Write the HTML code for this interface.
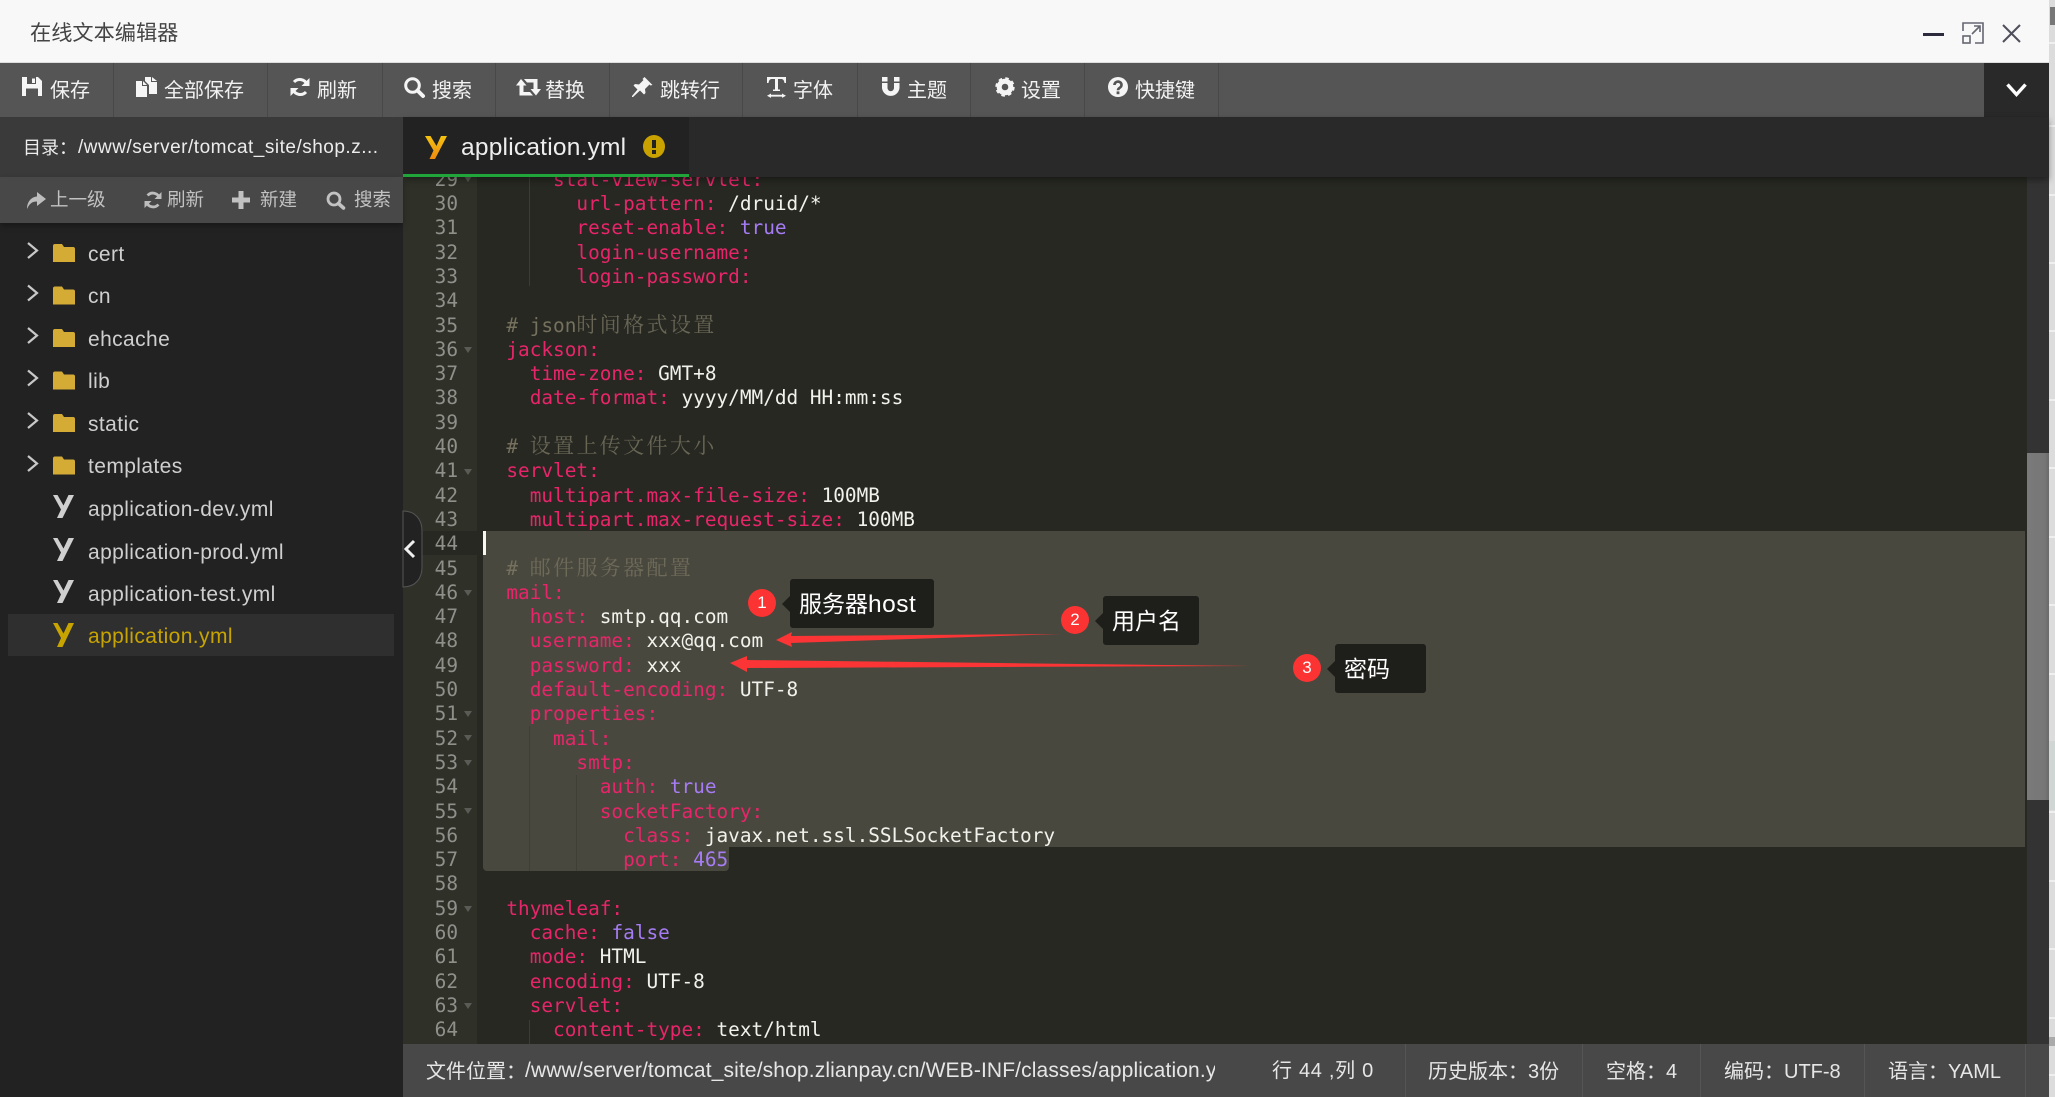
<!DOCTYPE html>
<html lang="zh"><head><meta charset="utf-8"><title>在线文本编辑器</title>
<style>
html,body{margin:0;padding:0;width:2055px;height:1097px;overflow:hidden;background:#dcdcdc}
body{position:relative;font-family:"Liberation Sans","Noto Sans CJK SC",sans-serif;filter:blur(.35px)}
.a{position:absolute}
.t{position:absolute;white-space:nowrap}
svg{position:absolute;overflow:visible}
.sep{position:absolute;top:63px;height:54px;width:1px;background:#484848}
.tb{color:#f2f2f2;font-size:20px;line-height:54px;top:63.5px}
.ab{color:#c2c2c2;font-size:18.5px;line-height:46px;top:177px}
.f{color:#cfcfcf;font-size:21px;line-height:42px;left:88px;letter-spacing:.4px}
.st{color:#e6e6e6;font-size:20px;line-height:53px;top:1045px}
.st.up{top:1043px}
.fw{font-family:"Noto Sans CJK SC",sans-serif}
.code{font-family:"DejaVu Sans Mono","Liberation Mono","Noto Sans CJK SC",monospace;font-size:19.4px;line-height:24.3px;white-space:pre}
.code div{height:24.3px}
.k{color:#e8256a}.v{color:#f2f2ec}.n{color:#a67cf5}.c{color:#75715e}
.cj{letter-spacing:2.36px;font-size:21px;font-family:"Liberation Mono","Noto Serif CJK SC",serif;opacity:.85}
.fold{position:absolute;left:464px;width:0;height:0;border-left:4.5px solid transparent;border-right:4.5px solid transparent;border-top:6px solid #5a5b54}
.sl{position:absolute;left:2049px;width:6px;height:2px;background:#efefef}
.box{position:absolute;background:#1e1e1a;border-radius:3px;color:#fff;font-size:23px}
.box:before{content:"";position:absolute;left:-8px;top:50%;margin-top:-8px;border-top:8px solid transparent;border-bottom:8px solid transparent;border-right:8px solid #1e1e1a}
.dot{position:absolute;width:28px;height:28px;border-radius:50%;background:#fb3333;color:#fff;font-size:17px;line-height:28px;text-align:center}
</style></head><body>

<!-- right strip -->
<div class="sl" style="top:42px"></div><div class="sl" style="top:125px"></div><div class="sl" style="top:194px"></div><div class="sl" style="top:262px"></div><div class="sl" style="top:330px"></div><div class="sl" style="top:399px"></div><div class="sl" style="top:467px"></div><div class="sl" style="top:536px"></div><div class="sl" style="top:604px"></div><div class="sl" style="top:673px"></div>
<div class="a" style="left:2049px;top:741px;width:6px;height:69px;background:#cfd6d3"></div>
<div class="sl" style="top:811px"></div><div class="sl" style="top:880px"></div><div class="sl" style="top:948px"></div><div class="sl" style="top:1017px"></div>
<div class="a" style="left:2049px;top:1037px;width:6px;height:9px;background:#aaa"></div>
<div class="sl" style="top:1074px"></div>
<div class="a" style="left:2050px;top:7px;width:5px;height:18px;background:#777"></div>

<!-- editor -->
<div class="a" style="left:403px;top:117px;width:1646px;height:980px;background:#272822"></div>
<div class="a" style="left:403px;top:177px;width:74px;height:867px;background:#2f3129"></div>
<div class="a" style="left:2027px;top:177px;width:22px;height:867px;background:#333"></div>
<div class="a" style="left:2027px;top:453px;width:22px;height:347px;background:linear-gradient(90deg,#7a7a7a,#777 80%,#6a6a6a)"></div>

<!-- selection -->
<div class="a" style="left:483px;top:531px;width:1542px;height:316px;background:#49483e;border-radius:3px 0 0 0"></div>
<div class="a" style="left:483px;top:846px;width:246px;height:25px;background:#49483e;border-radius:0 0 4px 4px"></div>
<div class="a" style="left:422px;top:531px;width:61px;height:24px;background:#272822"></div>
<div class="a" style="left:483px;top:531px;width:3px;height:24px;background:#f8f8f0"></div>

<!-- indent guides -->
<div class="a" style="left:529px;top:177px;width:1px;height:109px;background:#3b3c35"></div>
<div class="a" style="left:529px;top:726px;width:1px;height:145px;background:#403f36"></div>
<div class="a" style="left:576px;top:775px;width:1px;height:96px;background:#403f36"></div>
<div class="a" style="left:529px;top:1020px;width:1px;height:24px;background:#3b3c35"></div>

<!-- gutter numbers -->
<div class="a code" style="left:410px;top:167.8px;width:48px;text-align:right;color:#8f908a">29
30
31
32
33
34
35
36
37
38
39
40
41
42
43
44
45
46
47
48
49
50
51
52
53
54
55
56
57
58
59
60
61
62
63
64</div>
<div class="fold" style="top:176px"></div>
<div class="fold" style="top:347px"></div>
<div class="fold" style="top:469px"></div>
<div class="fold" style="top:590px"></div>
<div class="fold" style="top:711px"></div>
<div class="fold" style="top:735px"></div>
<div class="fold" style="top:760px"></div>
<div class="fold" style="top:808px"></div>
<div class="fold" style="top:906px"></div>
<div class="fold" style="top:1003px"></div>

<!-- code -->
<div class="a code" style="left:483px;top:167.8px;width:1540px;height:876px;overflow:hidden"><div>      <span class="k">stat-view-servlet:</span></div><div>        <span class="k">url-pattern:</span><span class="v"> /druid/*</span></div><div>        <span class="k">reset-enable:</span> <span class="n">true</span></div><div>        <span class="k">login-username:</span></div><div>        <span class="k">login-password:</span></div><div> </div><div>  <span class="c"># json<span class="cj">时间格式设置</span></span></div><div>  <span class="k">jackson:</span></div><div>    <span class="k">time-zone:</span><span class="v"> GMT+8</span></div><div>    <span class="k">date-format:</span><span class="v"> yyyy/MM/dd HH:mm:ss</span></div><div> </div><div>  <span class="c"># <span class="cj">设置上传文件大小</span></span></div><div>  <span class="k">servlet:</span></div><div>    <span class="k">multipart.max-file-size:</span><span class="v"> 100MB</span></div><div>    <span class="k">multipart.max-request-size:</span><span class="v"> 100MB</span></div><div> </div><div>  <span class="c"># <span class="cj">邮件服务器配置</span></span></div><div>  <span class="k">mail:</span></div><div>    <span class="k">host:</span><span class="v"> smtp.qq.com</span></div><div>    <span class="k">username:</span><span class="v"> xxx@qq.com</span></div><div>    <span class="k">password:</span><span class="v"> xxx</span></div><div>    <span class="k">default-encoding:</span><span class="v"> UTF-8</span></div><div>    <span class="k">properties:</span></div><div>      <span class="k">mail:</span></div><div>        <span class="k">smtp:</span></div><div>          <span class="k">auth:</span> <span class="n">true</span></div><div>          <span class="k">socketFactory:</span></div><div>            <span class="k">class:</span><span class="v"> javax.net.ssl.SSLSocketFactory</span></div><div>            <span class="k">port:</span> <span class="n">465</span></div><div> </div><div>  <span class="k">thymeleaf:</span></div><div>    <span class="k">cache:</span> <span class="n">false</span></div><div>    <span class="k">mode:</span><span class="v"> HTML</span></div><div>    <span class="k">encoding:</span><span class="v"> UTF-8</span></div><div>    <span class="k">servlet:</span></div><div>      <span class="k">content-type:</span><span class="v"> text/html</span></div></div>

<!-- annotations -->
<svg style="left:0;top:0" width="2055" height="1097">
<polygon fill="#fb3535" points="776,640 792,632 791,636 1060,634 791,643 792,647"/>
<polygon fill="#fb3535" points="730,663 747,656 747,660 1250,666 747,668 747,672"/>
</svg>
<div class="dot" style="left:748px;top:589px">1</div>
<div class="box" style="left:790px;top:579px;width:144px;height:49px"><span class="t" style="left:9px;top:1px;line-height:49px">服务器<span style="font-size:24.5px;letter-spacing:.5px">host</span></span></div>
<div class="dot" style="left:1061px;top:606px">2</div>
<div class="box" style="left:1103px;top:596px;width:96px;height:49px"><span class="t" style="left:9px;top:1px;line-height:49px">用户名</span></div>
<div class="dot" style="left:1293px;top:654px">3</div>
<div class="box" style="left:1335px;top:644px;width:91px;height:49px"><span class="t" style="left:9px;top:1px;line-height:49px">密码</span></div>

<!-- title bar -->
<div class="a" style="left:0;top:0;width:2049px;height:63px;background:#f8f8f8;border-bottom:0"></div>
<div class="a" style="left:0;top:62px;width:2049px;height:1px;background:#ddd"></div>
<div class="t" style="left:30px;top:2px;line-height:64px;font-size:21.2px;color:#444">在线文本编辑器</div>
<div class="a" style="left:1923px;top:33px;width:21px;height:3px;background:#2c2b3d"></div>
<svg style="left:1962px;top:22px" width="22" height="22" fill="none" stroke="#666672" stroke-width="1.6"><path d="M1 9V1H21V21H13"/><path d="M10 12L18 4M12 4h6v6" /><rect x="1" y="14" width="7" height="7"/></svg>
<svg style="left:2002px;top:24px" width="19" height="19" fill="none" stroke="#4f4f5c" stroke-width="2"><path d="M1 1L18 18M18 1L1 18"/></svg>

<!-- toolbar -->
<div class="a" style="left:0;top:63px;width:1984px;height:54px;background:#555"></div>
<div class="a" style="left:1984px;top:63px;width:65px;height:54px;background:#292929"></div>
<svg style="left:2006px;top:83px" width="21" height="14" fill="none" stroke="#fff" stroke-width="3.4"><path d="M1.5 1.5L10.5 11.5L19.5 1.5"/></svg>
<div class="sep" style="left:113px"></div><div class="sep" style="left:267px"></div><div class="sep" style="left:382px"></div><div class="sep" style="left:495px"></div><div class="sep" style="left:609px"></div><div class="sep" style="left:742px"></div><div class="sep" style="left:857px"></div><div class="sep" style="left:970px"></div><div class="sep" style="left:1084px"></div><div class="sep" style="left:1218px"></div>

<svg style="left:22px;top:77px" width="20" height="19" fill="#f5f5f5"><path fill-rule="evenodd" d="M0 0H16L20 4V19H0ZM5 0V7H14V0ZM4 11.5V19H16V11.5ZM10 1.500H13V6H10Z"/></svg>
<div class="t tb" style="left:50px">保存</div>
<svg style="left:136px;top:77px" width="21" height="20" fill="#f5f5f5"><path d="M0 4h6v5h5v11H0zM7 4l4 4H7zM9 0h6v5h6v12h-8V8L9 4zM16 0l5 4h-5z"/></svg>
<div class="t tb" style="left:164px">全部保存</div>
<svg style="left:290px;top:77px" width="20" height="20"><g fill="none" stroke="#f5f5f5" stroke-width="3"><path d="M17 7.500A7.800 7.800 0 0 0 4 5"/><path d="M3 12.500A7.800 7.800 0 0 0 16 15"/></g><path fill="#f5f5f5" d="M19.500 1v8h-8zM.5 19v-8h8z"/></svg>
<div class="t tb" style="left:317px">刷新</div>
<svg style="left:404px;top:77px" width="21" height="20" fill="none" stroke="#f5f5f5"><circle cx="8.500" cy="8.500" r="6.800" stroke-width="3"/><path d="M13.500 13.500L19 19" stroke-width="4" stroke-linecap="round"/></svg>
<div class="t tb" style="left:432px">搜索</div>
<svg style="left:516px;top:79px" width="25" height="17" fill="#f5f5f5"><path d="M5 0L10.500 6.500H7.500V13H14L17 16.500H3.500V6.500H0ZM20 16.500L14.500 10H17.500V3.500H11L8 0H21.500V10H25Z"/></svg>
<div class="t tb" style="left:545px">替换</div>
<svg style="left:632px;top:77px" width="21" height="21" fill="#f5f5f5"><path d="M12.500 0l8 8-2 .5-1-1-4.500 4.500.5 4-1.500 1.500-4-4L1 20H0v-1l5.500-6.500-4-4L3 7l4 .5L11.500 3l-1-1z"/></svg>
<div class="t tb" style="left:660px">跳转行</div>
<svg style="left:767px;top:77px" width="19" height="21" fill="#f5f5f5"><path d="M0 0H19V6H17.500C17 3 16 2 14 2H11V12.500H13V14H6V12.500H8V2H5C3 2 2 3 1.500 6H0Z"/><path d="M4 16.500v1.200h11v-1.200l4 2.200-4 2.200v-1.300H4v1.300L0 18.700z"/></svg>
<div class="t tb" style="left:793px">字体</div>
<svg style="left:882px;top:77px" width="18" height="20" fill="#f5f5f5"><path d="M0 0H5.500V4.500H0ZM12 0H17.500V4.500H12ZM0 6H5.500V11a3.200 3.200 0 0 0 6.500 0V6H17.500V11A8.800 8.800 0 0 1 0 11Z"/></svg>
<div class="t tb" style="left:907px">主题</div>
<svg style="left:995px;top:77px" width="20" height="20" fill="none" stroke="#f5f5f5"><circle cx="10" cy="10" r="5.800" stroke-width="5"/><circle cx="10" cy="10" r="8.300" stroke-width="2.800" stroke-dasharray="3.400 3.120"/></svg>
<div class="t tb" style="left:1021px">设置</div>
<svg style="left:1108px;top:77px" width="20" height="20"><circle cx="10" cy="10" r="10" fill="#f5f5f5"/><path d="M6.500 8a3.500 3.300 0 1 1 5.500 2.600c-1.200.8-2 1.200-2 2.600" fill="none" stroke="#555" stroke-width="2.600"/><rect x="8.600" y="14.400" width="2.800" height="2.800" fill="#555"/></svg>
<div class="t tb" style="left:1135px">快捷键</div>

<!-- tab bar -->
<div class="a" style="left:403px;top:117px;width:1646px;height:60px;background:#292929;box-shadow:0 3px 6px rgba(0,0,0,.35)"></div>
<div class="a" style="left:403px;top:117px;width:286px;height:57px;background:#222"></div>
<div class="a" style="left:403px;top:174px;width:286px;height:3px;background:#20a53a"></div>
<svg style="left:425px;top:135px" width="22" height="24"><defs><linearGradient id="g" x1="0" y1="0" x2="0" y2="1"><stop offset="0" stop-color="#f5c20f"/><stop offset="1" stop-color="#ef8a10"/></linearGradient></defs><path fill="url(#g)" d="M0 1H5.500L11.500 11L16 1H22L10 24H4.500L8.500 15.500Z"/></svg>
<div class="t" style="left:461px;top:118px;line-height:60px;font-size:24.5px;color:#eee;letter-spacing:.22px">application.yml</div>
<div class="a" style="left:643px;top:135px;width:22px;height:23px;border-radius:50%;background:#c9a200"></div>
<div class="a" style="left:652px;top:140px;width:4px;height:8px;background:#222"></div>
<div class="a" style="left:652px;top:150px;width:4px;height:3.500px;background:#222"></div>

<!-- sidebar -->
<div class="a" style="left:0;top:117px;width:403px;height:980px;background:#222"></div>
<div class="a" style="left:0;top:117px;width:403px;height:60px;background:#3a3a3a"></div>
<div class="t" style="left:23px;top:117px;line-height:61px;font-size:18px;color:#ececec">目录<span class="fw">&#65306;</span><span style="position:absolute;left:55px;top:0;font-size:19px;letter-spacing:.5px">/www/server/tomcat_site/shop.z...</span></div>
<div class="a" style="left:0;top:177px;width:403px;height:46px;background:#484848;box-shadow:0 3px 6px rgba(0,0,0,.3)"></div>
<svg style="left:27px;top:192px" width="19" height="17" fill="#bdbdbd"><path d="M10 0L19 7L10 14V9.500C5 9.500 2.500 11.500 0 17C0 10 4 5 10 4.500Z"/></svg>
<div class="t ab" style="left:50px">上一级</div>
<svg style="left:144px;top:191px" width="18" height="18"><g fill="none" stroke="#bdbdbd" stroke-width="2.800"><path d="M15.500 6.800A7 7 0 0 0 3.600 4.500"/><path d="M2.500 11.200A7 7 0 0 0 14.400 13.500"/></g><path fill="#bdbdbd" d="M17.500 1v7h-7zM.5 17v-7h7z"/></svg>
<div class="t ab" style="left:167px">刷新</div>
<svg style="left:232px;top:191px" width="18" height="18" fill="#c2c2c2"><path d="M6.500 0h5v6.500H18v5h-6.500V18h-5v-6.500H0v-5h6.500z"/></svg>
<div class="t ab" style="left:260px">新建</div>
<svg style="left:326px;top:191px" width="19" height="18" fill="none" stroke="#c2c2c2"><circle cx="8" cy="8" r="6" stroke-width="2.800"/><path d="M12.500 12.500L17.500 17" stroke-width="3.600" stroke-linecap="round"/></svg>
<div class="t ab" style="left:354px">搜索</div>

<!-- file tree -->
<div class="a" style="left:8px;top:614px;width:386px;height:42px;background:#2f2f2f"></div>
<svg style="left:0;top:0" width="100" height="700" fill="none" stroke="#c8c8c8" stroke-width="2.200"><path d="M28 243L37 250.500L28 258M28 285.500L37 293L28 300.500M28 328L37 335.500L28 343M28 370.500L37 378L28 385.500M28 413L37 420.500L28 428M28 456L37 463.500L28 471"/></svg>
<svg style="left:0;top:0" width="100" height="700" fill="#d4ab35"><path d="M53 246q0-2 2-2h7l2 3h9q2 0 2 2v13H53Z"/><path d="M53 288.500q0-2 2-2h7l2 3h9q2 0 2 2v13H53Z"/><path d="M53 331q0-2 2-2h7l2 3h9q2 0 2 2v13H53Z"/><path d="M53 373.500q0-2 2-2h7l2 3h9q2 0 2 2v13H53Z"/><path d="M53 416q0-2 2-2h7l2 3h9q2 0 2 2v13H53Z"/><path d="M53 458.500q0-2 2-2h7l2 3h9q2 0 2 2v13H53Z"/></svg>
<svg style="left:53px;top:495px" width="21" height="23" fill="#cfcfcf"><path d="M0 0H4.500L10.500 10.500L15.500 0H21L9.500 23H4L8 14.500Z"/></svg>
<svg style="left:53px;top:538px" width="21" height="23" fill="#cfcfcf"><path d="M0 0H4.500L10.500 10.500L15.500 0H21L9.500 23H4L8 14.500Z"/></svg>
<svg style="left:53px;top:580px" width="21" height="23" fill="#cfcfcf"><path d="M0 0H4.500L10.500 10.500L15.500 0H21L9.500 23H4L8 14.500Z"/></svg>
<svg style="left:53px;top:623px" width="21" height="24" fill="#c8a400"><path d="M0 0H4.500L10.500 10.500L15.500 0H21L9.500 24H4L8 15Z"/></svg>
<div class="t f" style="top:233.500px">cert</div>
<div class="t f" style="top:276px">cn</div>
<div class="t f" style="top:318.500px">ehcache</div>
<div class="t f" style="top:361px">lib</div>
<div class="t f" style="top:403.500px">static</div>
<div class="t f" style="top:445.500px">templates</div>
<div class="t f" style="top:488.500px">application-dev.yml</div>
<div class="t f" style="top:531.500px">application-prod.yml</div>
<div class="t f" style="top:573.500px">application-test.yml</div>
<div class="t f" style="top:616px;color:#c8a400">application.yml</div>

<!-- collapse handle -->
<svg style="left:403px;top:511px" width="20" height="76"><path d="M0 0C12 0 19 8 19 20V56C19 68 12 76 0 76Z" fill="#222" stroke="#555" stroke-width="1"/><path d="M11 30L3 38L11 46" fill="none" stroke="#f0f0f0" stroke-width="3"/></svg>

<!-- status bar -->
<div class="a" style="left:403px;top:1044px;width:1646px;height:53px;background:#484848"></div>
<div class="a" style="left:1405px;top:1044px;width:1px;height:53px;background:#555"></div>
<div class="a" style="left:1582px;top:1044px;width:1px;height:53px;background:#555"></div>
<div class="a" style="left:1700px;top:1044px;width:1px;height:53px;background:#555"></div>
<div class="a" style="left:1864px;top:1044px;width:1px;height:53px;background:#555"></div>
<div class="a" style="left:2025px;top:1044px;width:1px;height:53px;background:#555"></div>
<div class="t st up" style="left:426px">文件位置<span class="fw">&#65306;</span></div>
<div class="t st" style="left:525px;top:1044px;width:690px;overflow:hidden;font-size:21px;letter-spacing:.13px">/www/server/tomcat_site/shop.zlianpay.cn/WEB-INF/classes/application.yml</div>
<div class="t st" style="left:1272px;letter-spacing:.7px">行 44 ,列 0</div>
<div class="t st up" style="left:1428px">历史版本<span class="fw">&#65306;</span>3份</div>
<div class="t st up" style="left:1606px">空格<span class="fw">&#65306;</span>4</div>
<div class="t st up" style="left:1724px">编码<span class="fw">&#65306;</span>UTF-8</div>
<div class="t st up" style="left:1888px">语言<span class="fw">&#65306;</span>YAML</div>
</body></html>
